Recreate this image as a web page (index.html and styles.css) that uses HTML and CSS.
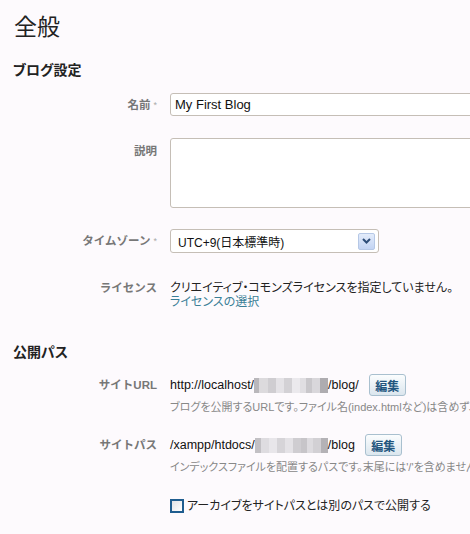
FILE: index.html
```html
<!DOCTYPE html>
<html lang="ja">
<head>
<meta charset="utf-8">
<title>全般</title>
<link rel="stylesheet" href="styles.css">
</head>
<body>
<div class="page">
  <h1 class="title">全般</h1>
  <h2 class="section">ブログ設定</h2>

  <div class="row row-name">
    <label class="lbl">名前<span class="req">*</span></label>
    <div class="field"><input class="text" type="text" value="My First Blog"></div>
  </div>

  <div class="row row-desc">
    <label class="lbl">説明</label>
    <div class="field"><textarea class="area"></textarea></div>
  </div>

  <div class="row row-tz">
    <label class="lbl">タイムゾーン<span class="req">*</span></label>
    <div class="field">
      <div class="select">
        <span class="select-text">UTC+9(日本標準時)</span>
        <span class="select-btn">
          <svg width="9" height="6" viewBox="0 0 9 6"><path d="M1 1 L4.5 4.5 L8 1" fill="none" stroke="#2d4d78" stroke-width="2"/></svg>
        </span>
      </div>
    </div>
  </div>

  <div class="row row-lic">
    <label class="lbl">ライセンス</label>
    <div class="field lic">
      <div class="lic-text">クリエイティブ・コモンズライセンスを指定していません。</div>
      <a class="link" href="#">ライセンスの選択</a>
    </div>
  </div>

  <h2 class="section section-pub">公開パス</h2>

  <div class="row row-url">
    <label class="lbl">サイトURL</label>
    <div class="field">
      <div class="pathline">
        <span class="path">http://localhost/<span class="blur"></span>/blog/</span>
        <button class="edit" type="button">編集</button>
      </div>
      <div class="help">ブログを公開するURLです。ファイル名(index.htmlなど)は含めず、末尾は'/'で終わります。</div>
    </div>
  </div>

  <div class="row row-path">
    <label class="lbl">サイトパス</label>
    <div class="field">
      <div class="pathline">
        <span class="path">/xampp/htdocs/<span class="blur blur2"></span>/blog</span>
        <button class="edit" type="button">編集</button>
      </div>
      <div class="help">インデックスファイルを配置するパスです。末尾には'/'を含めません。</div>
    </div>
  </div>

  <div class="row row-chk">
    <span class="lbl"></span>
    <label class="field chk"><span class="box"></span>アーカイブをサイトパスとは別のパスで公開する</label>
  </div>
</div>
</body>
</html>
```

FILE: styles.css
```css
html, body {
  margin: 0;
  padding: 0;
  overflow: hidden;
  background: #fdfafd;
}
body {
  font-family: "Liberation Sans", "Noto Sans CJK JP", sans-serif;
  font-feature-settings: "palt";
  color: #222;
  font-size: 13px;
}
.page {
  width: 470px;
  height: 534px;
  overflow: hidden;
  display: flex;
  flex-direction: column;
}
.title {
  margin: 12px 0 0 14px;
  font-size: 23px;
  line-height: 30px;
  font-weight: normal;
  color: #222;
}
.section {
  margin: 18px 0 0 13px;
  font-size: 14px;
  line-height: 20px;
  font-weight: bold;
  color: #222;
}
.section-pub {
  margin-top: 33px;
}
.row {
  display: grid;
  grid-template-columns: 157px 1fr;
  column-gap: 13px;
  white-space: nowrap;
}
.lbl {
  text-align: right;
  font-size: 11.5px;
  font-feature-settings: normal;
  font-weight: bold;
  color: #777;
  line-height: 16px;
}
.req {
  font-size: 9px;
  color: #aaa;
  margin-left: 3px;
  vertical-align: top;
  font-weight: normal;
}
.row-name { margin-top: 13px; align-items: center; }
.text {
  box-sizing: border-box;
  width: 320px;
  height: 23px;
  border: 1px solid #c5beb6;
  border-radius: 3px;
  background: #fff;
  padding: 0 4px;
  font: 13px "Liberation Sans", "Noto Sans CJK JP", sans-serif;
  color: #111;
  outline: none;
}
.row-desc { margin-top: 22px; }
.row-desc .lbl { margin-top: 5px; }
.area {
  display: block;
  box-sizing: border-box;
  width: 320px;
  height: 70px;
  border: 1px solid #c5beb6;
  border-radius: 3px;
  background: #fff;
  resize: none;
  outline: none;
}
.row-tz { margin-top: 21px; align-items: center; }
.select {
  box-sizing: border-box;
  width: 209px;
  height: 24px;
  border: 1px solid #c5beb6;
  border-radius: 3px;
  background: #fff;
  display: flex;
  align-items: center;
  justify-content: space-between;
  padding: 0 3px 0 7px;
}
.select-text {
  font-size: 12px;
  color: #111;
}
.select-btn {
  width: 17px;
  height: 17px;
  box-sizing: border-box;
  border: 1px solid #b6c8e6;
  border-radius: 2px;
  background: linear-gradient(#e3ecfb, #c3d4f3);
  display: flex;
  align-items: center;
  justify-content: center;
}
.row-lic { margin-top: 28px; }
.row-lic .lbl { line-height: 14px; }
.lic { font-size: 12px; line-height: 14px; color: #222; }
.link { color: #3b7f97; text-decoration: none; display: block; }
.row-url { margin-top: 12px; }
.row-url .lbl, .row-path .lbl { margin-top: 3px; }
.pathline {
  display: flex;
  align-items: center;
  height: 22px;
}
.path {
  font-size: 12.5px;
  color: #111;
  display: flex;
  align-items: center;
}
.blur {
  display: inline-block;
  width: 74px;
  height: 15px;
  background:
    linear-gradient(90deg, #b9b7bb 0 5px, #dcdadd 5px 14px, #cfcdd1 14px 22px, #e4e2e6 22px 30px, #d3d1d5 30px 38px, #ebe9ed 38px 46px, #e0dee2 46px 52px, #c9c7cb 52px 58px, #d9d7db 58px 66px, #aeacb0 66px 74px);
}
.blur2 {
  width: 73px;
  background:
    linear-gradient(90deg, #c2c0c4 0 6px, #dedce0 6px 14px, #e8e6ea 14px 22px, #d6d4d8 22px 30px, #e4e2e6 30px 38px, #cfcdd1 38px 46px, #c7c5c9 46px 52px, #dddbdf 52px 58px, #d2d0d4 58px 66px, #b4b2b6 66px 73px);
}
.edit {
  margin-left: 10px;
  box-sizing: border-box;
  width: 37px;
  height: 22px;
  padding: 0;
  border: 1px solid #a9c0cf;
  border-radius: 3px;
  background: linear-gradient(#fbfdfe, #dbe6ee);
  color: #22557e;
  font: bold 12px "Noto Sans CJK JP", sans-serif;
}
.help {
  margin-top: 4px;
  font-size: 11px;
  line-height: 14px;
  color: #888;
}
.row-path { margin-top: 20px; }
.row-chk { margin-top: 24px; }
.chk {
  display: flex;
  align-items: center;
  font-size: 12px;
  color: #222;
  line-height: 16px;
}
.box {
  box-sizing: border-box;
  width: 14px;
  height: 14px;
  border: 2px solid #1f5d8f;
  background: linear-gradient(135deg, #e0e2e6, #ffffff);
  margin-right: 3px;
}
```
